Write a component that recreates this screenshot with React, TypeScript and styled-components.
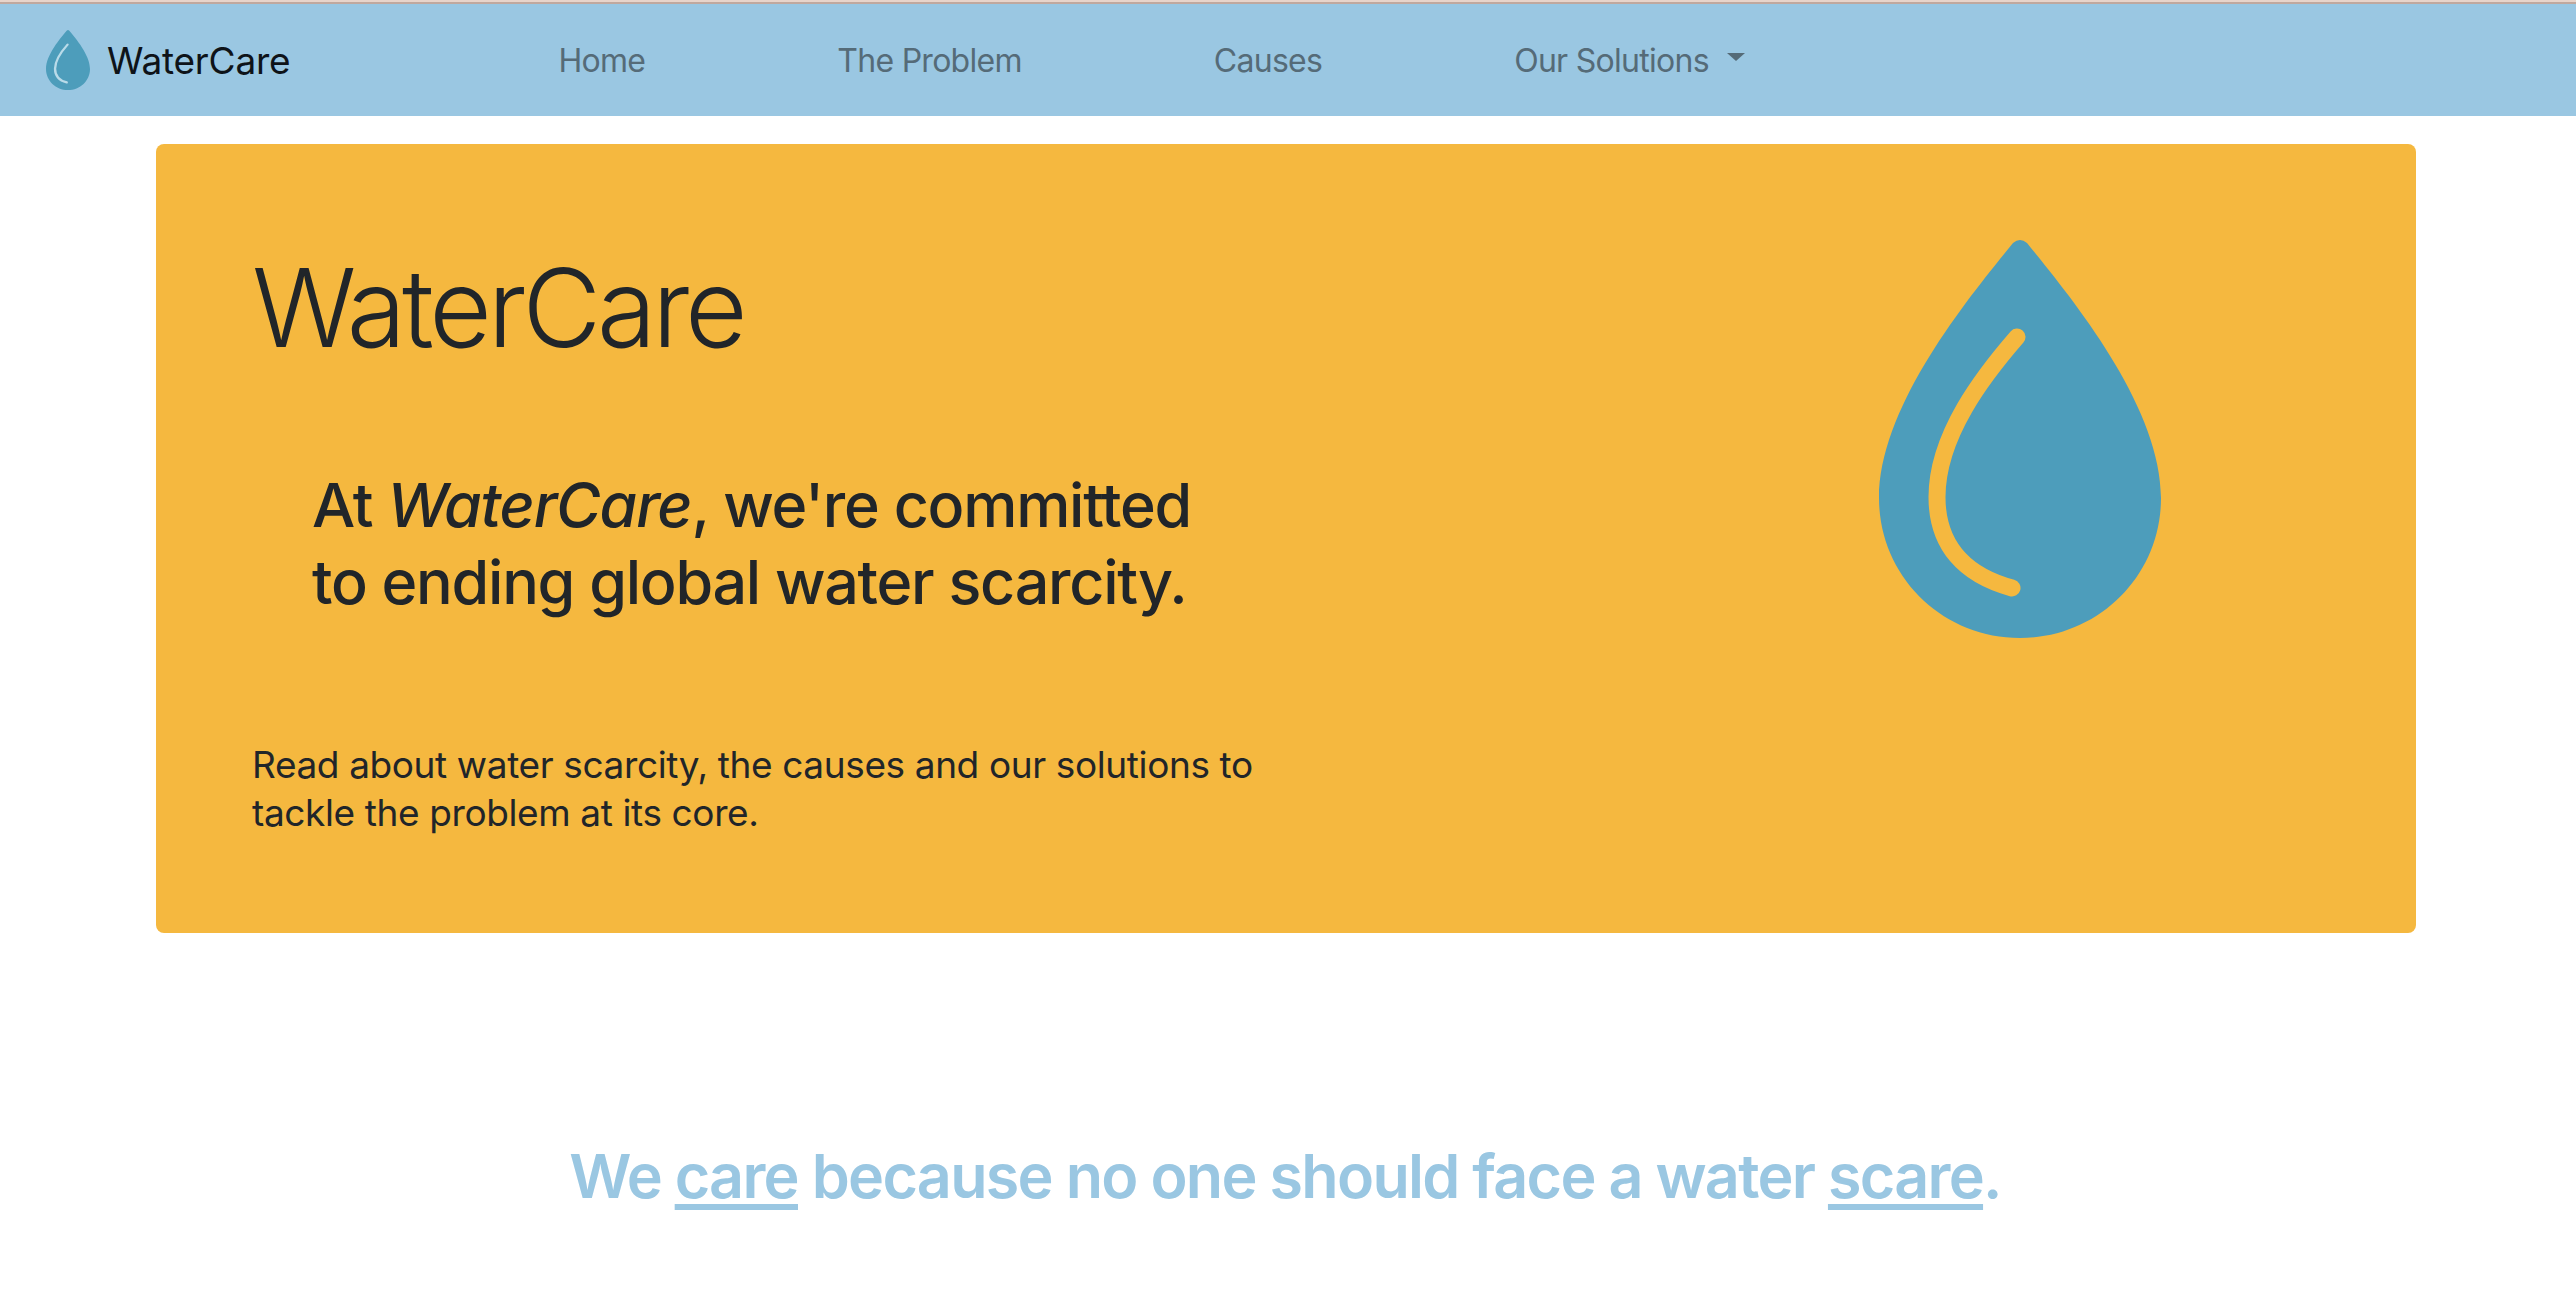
import React from 'react';
import styled, {createGlobalStyle} from 'styled-components';

const GlobalStyle = createGlobalStyle`
  html, body {
    margin: 0;
    background: #fff;
    font-family: Inter, 'Liberation Sans', sans-serif;
  }
`;

const Page = styled.div`
  width: 2576px;
  height: 1310px;
  overflow: hidden;
`;

const Navbar = styled.nav`
  display: flex;
  align-items: center;
  height: 112px;
  padding: 4px 0 0 46px;
  background: linear-gradient(#e8d4ca 0 2px, #c0a89e 2px 4px, #9ac7e2 4px);
`;

const Brand = styled.a`
  display: flex;
  align-items: center;
  gap: 17px;
  margin-right: 268px;
  color: #0e1318;
  font-size: 37px;
  letter-spacing: -0.2px;
`;

const NavLinks = styled.div`
  display: flex;
  gap: 192px;
`;

const NavLink = styled.a`
  display: flex;
  align-items: center;
  color: #556b78;
  font-size: 32px;
  letter-spacing: -0.72px;
`;

const Caret = styled.span`
  width: 0;
  height: 0;
  margin-left: 18px;
  margin-bottom: 6px;
  border-top: 8px solid #556b78;
  border-left: 9px solid transparent;
  border-right: 9px solid transparent;
`;

const Hero = styled.section`
  display: grid;
  grid-template-columns: 1627px 282px;
  width: 2260px;
  height: 789px;
  margin: 28px 0 0 156px;
  padding-left: 96px;
  box-sizing: border-box;
  background: #f5b83f;
  border-radius: 8px;
  color: #212529;
`;

const HeroText = styled.div`
  display: flex;
  flex-direction: column;
  align-items: flex-start;
`;

const HeroTitle = styled.h1`
  margin: 100px 0 0;
  font-size: 108px;
  line-height: 128px;
  font-weight: 300;
  letter-spacing: -4.1px;
`;

const HeroLead = styled.h2`
  margin: 95px 0 0 60px;
  font-size: 61px;
  line-height: 77px;
  font-weight: 500;
  letter-spacing: -1.25px;
`;

const HeroNote = styled.p`
  margin: 120px 0 0;
  font-size: 37px;
  line-height: 48px;
  letter-spacing: -0.38px;
`;

const DropSlot = styled.div`
  padding-top: 96px;
`;

const Slogan = styled.h3`
  margin: 203px 0 0;
  padding-right: 6px;
  text-align: center;
  color: #9ac7e2;
  font-size: 61px;
  line-height: 80px;
  font-weight: 600;
  letter-spacing: -1.7px;

  & u {
    text-underline-offset: 6px;
    text-decoration-thickness: 6px;
  }
`;

const Drop: React.FC<{width: number; height: number; stroke: string; line: number}> = ({
  width,
  height,
  stroke,
  line,
}) => (
  <svg
    width={width}
    height={height}
    viewBox="0 0 282 398"
    preserveAspectRatio="none"
    style={{display: 'block'}}
  >
    <path
      fill="#4d9dbb"
      d="M134 3Q141 -3 148 3C190 55 282 165 282 258C282 336 219 398 141 398C63 398 0 336 0 258C0 165 92 55 134 3Z"
    />
    <path
      fill="none"
      stroke={stroke}
      strokeWidth={line}
      strokeLinecap="round"
      d="M138 97C105 135 58 195 58 257C58 305 85 335 133 348"
    />
  </svg>
);

const App: React.FC = () => {
  return (
    <Page>
      <GlobalStyle />
      <Navbar>
        <Brand>
          <Drop width={44} height={60} stroke="#b9dbe9" line={15} />
          WaterCare
        </Brand>
        <NavLinks>
          <NavLink>Home</NavLink>
          <NavLink>The Problem</NavLink>
          <NavLink>Causes</NavLink>
          <NavLink>
            Our Solutions
            <Caret />
          </NavLink>
        </NavLinks>
      </Navbar>
      <Hero>
        <HeroText>
          <HeroTitle>WaterCare</HeroTitle>
          <HeroLead>
            At <em>WaterCare</em>, we're committed
            <br />
            to ending global water scarcity.
          </HeroLead>
          <HeroNote>
            Read about water scarcity, the causes and our solutions to
            <br />
            tackle the problem at its core.
          </HeroNote>
        </HeroText>
        <DropSlot>
          <Drop width={282} height={398} stroke="#f5b83f" line={17} />
        </DropSlot>
      </Hero>
      <Slogan>
        We <u>care</u> because no one should face a water <u>scare</u>.
      </Slogan>
    </Page>
  );
};

export default App;
